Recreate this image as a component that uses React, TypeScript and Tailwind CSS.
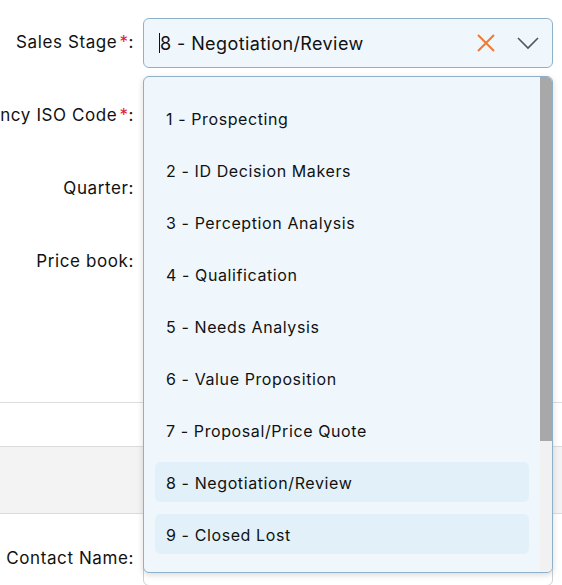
import React from "react";

const options = [
  "1 - Prospecting",
  "2 - ID Decision Makers",
  "3 - Perception Analysis",
  "4 - Qualification",
  "5 - Needs Analysis",
  "6 - Value Proposition",
  "7 - Proposal/Price Quote",
  "8 - Negotiation/Review",
  "9 - Closed Lost",
  "10 - Closed Won",
];

function Label({ text, required }: { text: string; required?: boolean }) {
  return (
    <div className="w-[143px] shrink-0 flex justify-end pr-[9px] whitespace-nowrap text-[17px] tracking-[0.6px] text-[#111]">
      <span>{text}</span>
      {required && <span className="text-[#e0182d] ml-[2px]">*</span>}
      <span>:</span>
    </div>
  );
}

export default function App() {
  return (
    <div
      className="relative w-[562px] h-[585px] overflow-hidden bg-white"
      style={{ fontFamily: "Inter, 'Noto Sans', sans-serif" }}
    >
      <div className="flex flex-col gap-[23px] pt-[18px]">
        <div className="flex items-center h-[50px]">
          <Label text="Sales Stage" required />
          <div className="w-[410px] h-[50px] rounded-[6px] border border-[#8fb0c9] bg-[#eff7fd] flex items-center pl-[15px] pr-[13px]">
            <span className="w-px h-[20px] bg-[#111]" />
            <span className="text-[18px] tracking-[0.4px] text-[#111] flex-1">8 - Negotiation/Review</span>
            <svg width="20" height="20" viewBox="0 0 20 20" className="mr-[21px]">
              <path d="M2 2 L18 18 M18 2 L2 18" stroke="#f07a30" strokeWidth="2" fill="none" />
            </svg>
            <svg width="22" height="14" viewBox="0 0 22 14">
              <path d="M1 2 L11 12 L21 2" stroke="#555" strokeWidth="1.6" fill="none" />
            </svg>
          </div>
        </div>
        <div className="flex items-center h-[50px]">
          <Label text="Currency ISO Code" required />
          <div className="w-[410px] h-[46px] rounded-[6px] border border-[#8fb0c9] bg-white" />
        </div>
        <div className="flex items-center h-[50px]">
          <Label text="Quarter" />
          <div className="w-[410px] h-[46px] rounded-[6px] border border-[#8fb0c9] bg-white" />
        </div>
        <div className="flex items-center h-[50px]">
          <Label text="Price book" />
          <div className="w-[410px] h-[46px] rounded-[6px] border border-[#8fb0c9] bg-white" />
        </div>
      </div>
      <div className="mt-[115px] border-t border-[#dcdcdc] h-[44px]" />
      <div className="border-t border-[#dcdcdc] h-[67px] bg-[#f3f3f3]" />
      <div className="border-t border-[#dcdcdc] pt-[26px] flex items-start">
        <div className="w-[143px] shrink-0 flex justify-end pr-[9px] pt-[6px] whitespace-nowrap text-[17px] tracking-[0.6px] text-[#111]">
          Contact Name:
        </div>
        <div className="w-[410px] h-[46px] rounded-[6px] border border-[#cfcfcf] bg-white" />
      </div>

      <div className="absolute left-[143px] top-[76px] w-[410px] h-[497px] rounded-[6px] border border-[#8fb0c9] bg-[#eff7fd] shadow-[0_2px_6px_rgba(0,0,0,0.15)] overflow-hidden flex">
        <div className="flex-1 pt-[21px] pl-[11px] pr-[11px] flex flex-col gap-[12px]">
          {options.map((o, i) => (
            <div
              key={o}
              className={`h-[40px] shrink-0 rounded-[5px] pl-[11px] pt-[1px] flex items-center text-[16px] tracking-[0.6px] text-[#111] ${
                i === 7 || i === 8 ? "bg-[#e2f1f9]" : ""
              }`}
            >
              {o}
            </div>
          ))}
        </div>
        <div className="w-[12px] bg-[#f1f1f1] flex flex-col">
          <div className="h-[364px] bg-[#a8a8a8]" />
        </div>
      </div>
    </div>
  );
}
